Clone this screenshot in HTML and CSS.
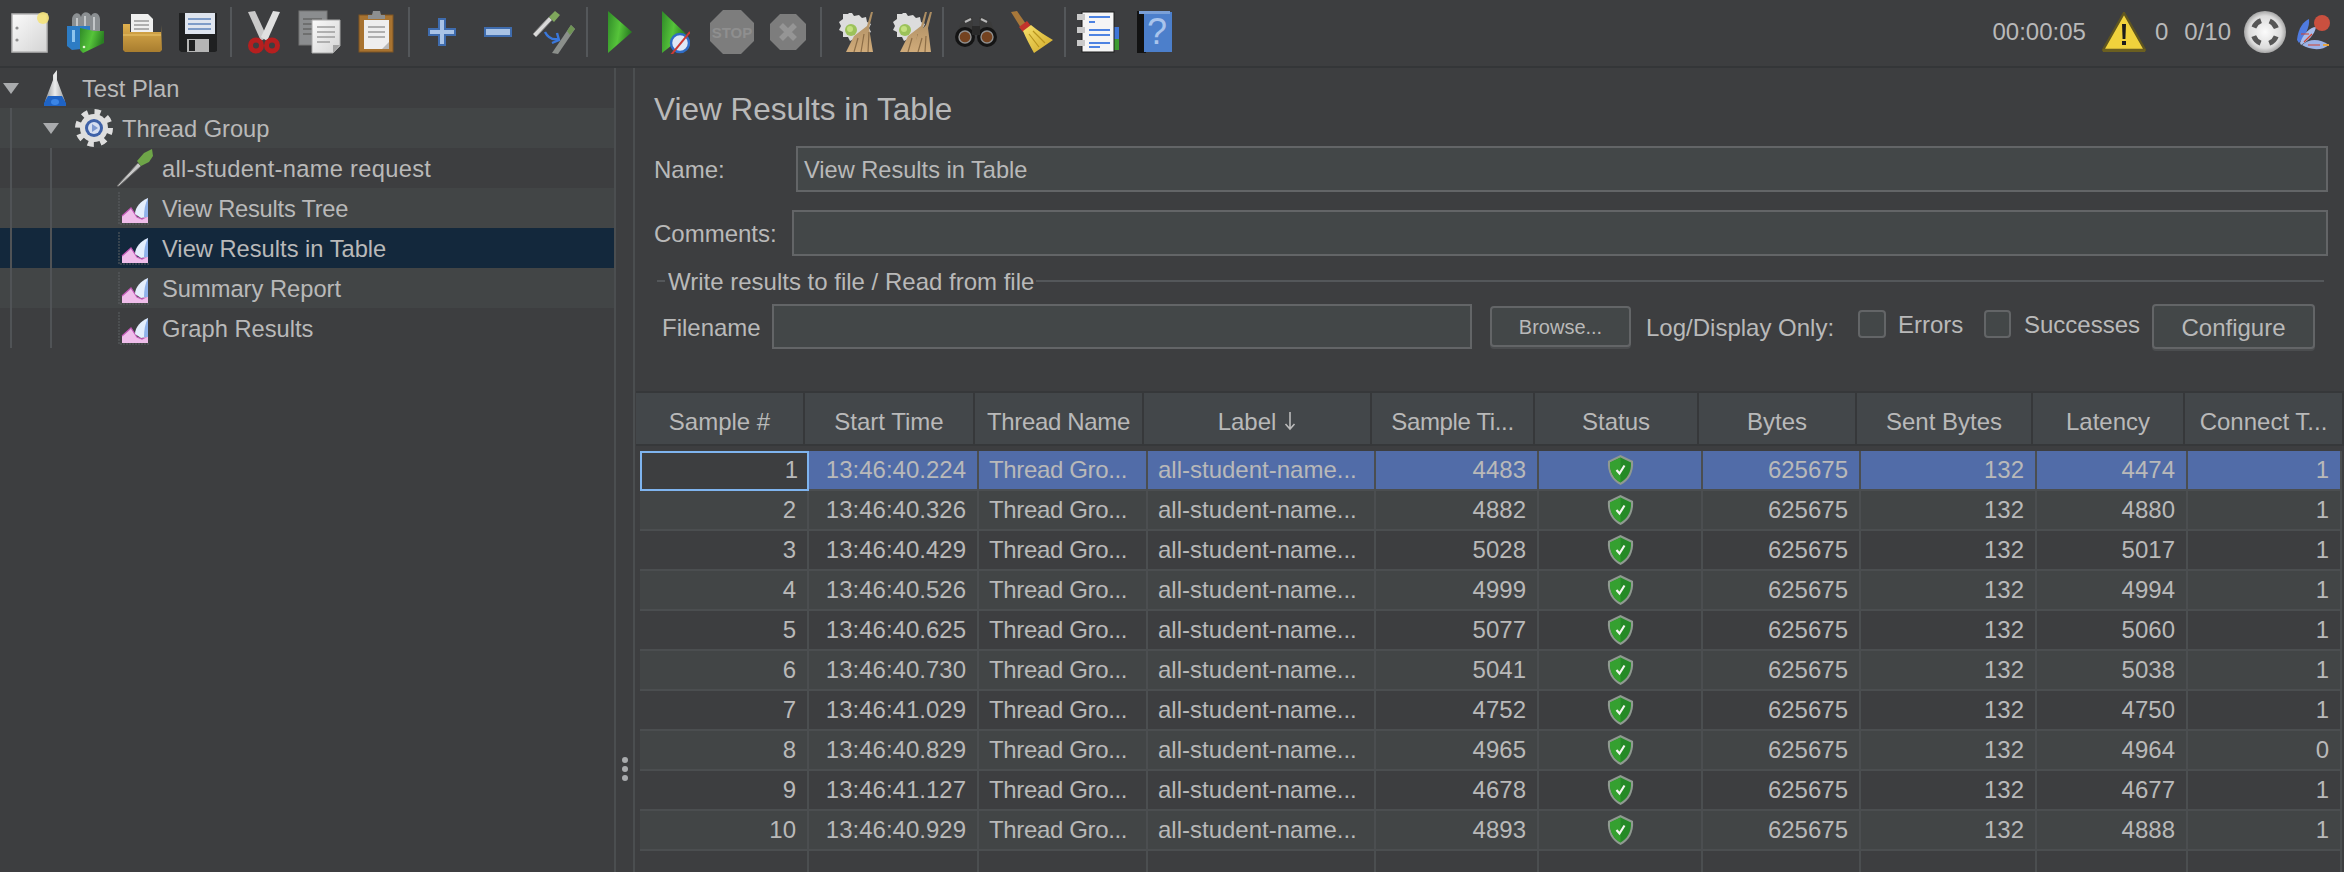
FILE: index.html
```html
<!DOCTYPE html>
<html lang="en">
<head>
<meta charset="utf-8">
<title>Apache JMeter - View Results in Table</title>
<link rel="stylesheet" href="styles.css">
</head>
<body>
<svg class="defs" width="0" height="0" aria-hidden="true">
  <defs>
    <linearGradient id="gPaper" x1="0" y1="0" x2="1" y2="1"><stop offset="0" stop-color="#fafafa"/><stop offset="1" stop-color="#d4d4d4"/></linearGradient>
    <linearGradient id="gGreen" x1="0" y1="0" x2="1" y2="0.3"><stop offset="0" stop-color="#2f8a28"/><stop offset="0.55" stop-color="#56c43a"/><stop offset="1" stop-color="#2a7f22"/></linearGradient>
    <linearGradient id="gFolder" x1="0" y1="0" x2="0" y2="1"><stop offset="0" stop-color="#e0b04e"/><stop offset="1" stop-color="#a87d2f"/></linearGradient>
    <linearGradient id="gTan" x1="0" y1="0" x2="0" y2="1"><stop offset="0" stop-color="#a88a60"/><stop offset="1" stop-color="#d0ab7a"/></linearGradient>
    <linearGradient id="gYellow" x1="0" y1="0" x2="1" y2="1"><stop offset="0" stop-color="#f6e06a"/><stop offset="1" stop-color="#d0a828"/></linearGradient>
    <radialGradient id="gBall" cx="0.5" cy="0.5" r="0.55"><stop offset="0" stop-color="#fbfbfb"/><stop offset="0.7" stop-color="#dcdcdc"/><stop offset="1" stop-color="#8e8e8e"/></radialGradient>
    <linearGradient id="gFlask" x1="0" y1="0" x2="1" y2="0"><stop offset="0" stop-color="#8d9093"/><stop offset="0.5" stop-color="#eceded"/><stop offset="1" stop-color="#9a9c9e"/></linearGradient>
    <symbol id="iGraph" viewBox="0 0 33 33">
      <path d="M1 0V32H32" fill="none" stroke="#5d6062" stroke-width="1" stroke-dasharray="2 1"/>
      <path d="M4 31V24L13 16L19 25L24 27L30 24V31Z" fill="#efbdea"/>
      <path d="M4 24L13 16L19 25L24 27L30 24" fill="none" stroke="#c25ab8" stroke-width="1.2"/>
      <path d="M17 22C17 15 23 9 30 6V25L23 26Z" fill="#e4eefc"/>
      <path d="M30 6V25L26 25C26 18 27 12 30 6Z" fill="#8fb2ea"/>
    </symbol>
    <symbol id="iShield" viewBox="0 0 27 30">
      <path d="M13.5 0L26 6C27 17 22 26 13.5 30C5 26 0 17 1 6Z" fill="#8f9a90"/>
      <path d="M13.5 2.5L24 7.5C24.5 17 20 24 13.5 27.5C7 24 2.5 17 3 7.5Z" fill="#248a26"/>
      <path d="M13.5 2.5V27.5C7 24 2.5 17 3 7.5Z" fill="#35a030"/>
      <path d="M9.5 15L12.5 18.5L17.5 10.5" fill="none" stroke="#f2f7f0" stroke-width="2.2"/>
    </symbol>
    <symbol id="iBroomG" viewBox="0 0 40 44">
      <path d="M15 3l3 0 2 3 5-1 3 3 4-1 1 5 4 2-2 4 2 4-4 2-1 5-5-1-3 3-4-2-4 2-2-4-5 0 0-5-4-2 2-4-2-4 4-3 0-5 5 0z" fill="#dcdcdc"/>
      <circle cx="17" cy="20" r="6" fill="#9cc25a"/>
      <circle cx="16" cy="19" r="3" fill="#c4e07e"/>
      <path d="M39 2L35 18L39 42L12 42L20 26L33 16L37 2Z" fill="url(#gTan)"/>
      <path d="M24 28L20 42M30 24L27 42M35 22L34 42" stroke="#8c6d47" stroke-width="1.2"/>
    </symbol>
  </defs>
</svg>

<div class="app">
  <header class="toolbar">
    <div class="tb-btn"><svg width="38" height="42" viewBox="0 0 38 42"><rect x="1" y="3" width="35" height="38" fill="url(#gPaper)" stroke="#b5b5b5" stroke-width="1.5"/><circle cx="6" cy="17" r="1.6" fill="#8e8e8e"/><circle cx="6" cy="29" r="1.6" fill="#8e8e8e"/><circle cx="32" cy="7" r="6" fill="#f4e27a" opacity=".9"/></svg></div>
    <div class="tb-btn"><svg width="40" height="44" viewBox="0 0 40 44"><path d="M6 10C6 2 14 1 15 7C16 1 23 1 25 6C27 1 35 2 34 12L34 22H6Z" fill="#8b8f92"/><path d="M11 8V20M19 6V20M28 7V20" stroke="#c3c6c8" stroke-width="2"/><path d="M1 16H24V38L6 40L1 36Z" fill="#2d7cc4"/><rect x="6" y="20" width="3" height="12" fill="#8cc4ee"/><path d="M14 18L28 21H38V33L17 43L14 40Z" fill="url(#gGreen)"/><circle cx="18" cy="37" r="1.3" fill="#e2f5d0"/></svg></div>
    <div class="tb-btn"><svg width="40" height="44" viewBox="0 0 40 44"><path d="M9 4H26L31 9V28H9Z" fill="#efefef"/><path d="M12 11H27M12 15H27M12 19H27" stroke="#9a9a9a" stroke-width="1.5"/><path d="M1 14H8V22H39V15L40 40L38 42H3L1 40Z" fill="url(#gFolder)"/><path d="M1 25H39" stroke="#eac56d" stroke-width="1"/></svg></div>
    <div class="tb-btn"><svg width="40" height="42" viewBox="0 0 40 42"><path d="M1 2H39V40L37 41H3L1 39Z" fill="#1f2021"/><rect x="7" y="2" width="30" height="21" fill="#dfe5ef"/><path d="M10 8H33M10 13H33M10 18H33" stroke="#7e9cc8" stroke-width="2"/><rect x="9" y="28" width="22" height="13" fill="#b5b5b5"/><rect x="11" y="29" width="6" height="11" fill="#1f2021"/></svg></div>
    <div class="tb-sep"></div>
    <div class="tb-btn"><svg width="34" height="44" viewBox="0 0 34 44"><path d="M1 2L8 1L20 27L14 31Z" fill="#c9c9c9"/><path d="M33 2L26 1L14 27L20 31Z" fill="#e0e0e0"/><circle cx="9" cy="35.5" r="5.5" fill="none" stroke="#b51f1f" stroke-width="5"/><circle cx="25" cy="35.5" r="5.5" fill="none" stroke="#b51f1f" stroke-width="5"/></svg></div>
    <div class="tb-btn"><svg width="44" height="44" viewBox="0 0 44 44"><rect x="1" y="1" width="28" height="34" fill="#8b8d8f" stroke="#777" /><path d="M5 9H24M5 14H15M5 19H15M5 24H15" stroke="#666" stroke-width="1.6"/><path d="M14 10H42V36L35 43H14Z" fill="url(#gPaper)" stroke="#a8a8a8"/><path d="M19 17H37M19 22H37M19 27H37M19 32H32" stroke="#9d9d9d" stroke-width="1.6"/><path d="M42 35H35V43Z" fill="#a2a2a2"/></svg></div>
    <div class="tb-btn"><svg width="36" height="44" viewBox="0 0 36 44"><rect x="1" y="5" width="34" height="37" fill="#a87330" stroke="#7e5522"/><rect x="6" y="10" width="25" height="29" fill="#eeeeee"/><path d="M10 17H27M10 22H27M10 27H27" stroke="#9a9a9a" stroke-width="1.6"/><path d="M31 32L24 39H31Z" fill="#b8b8b8"/><path d="M10 9V5H14L15 1H22L23 5H27V9Z" fill="#8d8f90"/></svg></div>
    <div class="tb-sep"></div>
    <div class="tb-btn"><svg width="28" height="28" viewBox="0 0 28 28"><path d="M11 1H17V11H27V17H17V27H11V17H1V11H11Z" fill="#a9c3e6" stroke="#3f6cae" stroke-width="2"/></svg></div>
    <div class="tb-btn"><svg width="28" height="10" viewBox="0 0 28 10"><rect x="1" y="1" width="26" height="8" fill="#a9c3e6" stroke="#3f6cae" stroke-width="2"/></svg></div>
    <div class="tb-btn"><svg width="44" height="44" viewBox="0 0 44 44"><path d="M1 24L17 7L20 10L4 27Z" fill="#d9d9d9" stroke="#8a8a8a"/><path d="M17 7L23 1L28 5L22 12Z" fill="#7fa75c"/><path d="M13 22C16 28 20 30 26 29" fill="none" stroke="#3a78dc" stroke-width="2.4"/><path d="M25 23L27 30L20 33" fill="none" stroke="#3a78dc" stroke-width="2.4"/><path d="M20 43L39 15L43 19L26 44Z" fill="#8b8f8b"/><path d="M35 21L39 15L43 19L38 25Z" fill="#6f9455"/></svg></div>
    <div class="tb-sep"></div>
    <div class="tb-btn"><svg width="24" height="44" viewBox="0 0 24 44"><path d="M0 1L24 22L0 43Z" fill="url(#gGreen)"/></svg></div>
    <div class="tb-btn"><svg width="28" height="44" viewBox="0 0 28 44"><path d="M0 1L24 24L0 43Z" fill="url(#gGreen)"/><circle cx="18" cy="33" r="9" fill="#dfe8f6" stroke="#2f6cc4" stroke-width="2.5"/><path d="M9 45L28 22" stroke="#cc3a34" stroke-width="2"/></svg></div>
    <div class="tb-btn"><svg width="44" height="44" viewBox="0 0 44 44"><path d="M13 0H31L44 13V31L31 44H13L0 31V13Z" fill="#7d7d7d"/><text x="22" y="28" text-anchor="middle" class="stop-word">STOP</text></svg></div>
    <div class="tb-btn"><svg width="36" height="36" viewBox="0 0 36 36"><path d="M10 0H26L36 10V26L26 36H10L0 26V10Z" fill="#7d7d7d"/><path d="M11 11L25 25M25 11L11 25" stroke="#959595" stroke-width="5.5"/></svg></div>
    <div class="tb-sep"></div>
    <div class="tb-btn"><svg width="40" height="44"><use href="#iBroomG"/></svg></div>
    <div class="tb-btn"><svg width="44" height="44" viewBox="0 0 44 44"><svg width="40" height="44" x="0"><use href="#iBroomG"/></svg><path d="M44 2L40 18L43 42L24 42L30 24L38 15L42 2Z" fill="url(#gTan)"/><path d="M34 28L30 42M38 26L37 42" stroke="#8c6d47" stroke-width="1.2"/></svg></div>
    <div class="tb-sep"></div>
    <div class="tb-btn"><svg width="44" height="30" viewBox="0 0 44 30"><path d="M7 5L15 0H19V9H25V0H29L37 5L41 17H3Z" fill="#3b3b3b"/><path d="M11 5L17 2M27 2L33 5" stroke="#b9b9b9" stroke-width="2"/><circle cx="11" cy="20" r="10" fill="#141414"/><circle cx="33" cy="20" r="10" fill="#141414"/><circle cx="11" cy="20" r="6" fill="#74421f" stroke="#8f8f8f" stroke-width="1.4"/><circle cx="33" cy="20" r="6" fill="#74421f" stroke="#8f8f8f" stroke-width="1.4"/><path d="M18 9H26V18H18Z" fill="#2a2a2a"/></svg></div>
    <div class="tb-btn"><svg width="44" height="44" viewBox="0 0 44 44"><path d="M1 2L7 1L16 14L11 18Z" fill="#a8783a"/><path d="M9 17L17 11L21 16L13 22Z" fill="#c1342c"/><path d="M13 21L21 15C28 21 36 26 43 30L24 43C20 36 16 28 13 21Z" fill="url(#gYellow)"/><path d="M19 24L29 37M23 21L35 33" stroke="#b8941e" stroke-width="1.2"/></svg></div>
    <div class="tb-sep"></div>
    <div class="tb-btn"><svg width="42" height="42" viewBox="0 0 42 42"><rect x="36" y="16" width="6" height="12" fill="#3f76d8"/><rect x="36" y="28" width="6" height="11" fill="#3d9b30"/><rect x="5" y="1" width="32" height="40" fill="#f5f5f5" stroke="#1d1d1d"/><path d="M0 6H8M0 19H8M0 32H8" stroke="#c9c9c9" stroke-width="6"/><path d="M12 6H33M12 11H18M12 19H33M12 24H33M12 32H33M12 36H23" stroke="#4d83e2" stroke-width="2"/></svg></div>
    <div class="tb-btn"><svg width="36" height="44" viewBox="0 0 36 44"><rect x="1" y="1" width="9" height="42" fill="#121212"/><rect x="8" y="2" width="28" height="40" fill="#4c7fcb"/><rect x="3" y="1" width="31" height="3" fill="#7aa0d8"/><text x="21" y="34" text-anchor="middle" class="help-mark">?</text></svg></div>
    <div class="status">
      <span class="status-time">00:00:05</span>
      <svg class="st-warn" width="44" height="40" viewBox="0 0 44 40"><path d="M22 1L43 38H1Z" fill="#f0d23c" stroke="#5f5520" stroke-width="2.4"/><path d="M1 37H43V40H1Z" fill="#6b5f20"/><path d="M20 12H24L23.4 27H20.6Z" fill="#1c1c1c"/><rect x="20" y="29" width="4" height="4" fill="#1c1c1c"/></svg>
      <span class="st-count">0</span>
      <span class="st-threads">0/10</span>
      <svg class="st-ball" width="44" height="44" viewBox="0 0 44 44"><circle cx="22" cy="22" r="21" fill="url(#gBall)"/><circle cx="22" cy="22" r="12" fill="none" stroke="#565656" stroke-width="5" stroke-dasharray="10 8.85" stroke-dashoffset="-4.4"/></svg>
      <svg class="st-feather" width="36" height="36" viewBox="0 0 36 36"><path d="M1 26C2 14 8 7 13 5C14 13 9 22 3 29Z" fill="#4f7be0"/><path d="M4 29C7 20 14 13 20 13C19 20 12 27 5 31Z" fill="#a9bdeb"/><path d="M6 31C14 24 24 25 33 31C26 37 14 36 6 31Z" fill="#9cb2e6"/><path d="M5 20L13 20M8 28L16 20M12 31L24 31" stroke="#d2432e" stroke-width="1.2"/><path d="M27 31L33 31" stroke="#e6a33e" stroke-width="2"/><circle cx="26" cy="9" r="8" fill="#c9503f"/></svg>
    </div>
  </header>

  <main class="main">
    <nav class="tree">
      <i class="guide guide-a"></i>
      <i class="guide guide-b"></i>
      <div class="tree-row depth-0">
        <i class="arrow"></i>
        <svg class="flask" width="24" height="38" viewBox="0 0 24 38"><path d="M10 6L14 1V11L22 32V37H2V32L10 11Z" fill="url(#gFlask)"/><path d="M5 27H19L23 34V37H1V34Z" fill="#1f63c4"/><ellipse cx="12" cy="33" rx="4" ry="3" fill="#3b85e6"/></svg>
        <span>Test Plan</span>
      </div>
      <div class="tree-row alt depth-1">
        <i class="arrow"></i>
        <svg class="gear" width="38" height="38" viewBox="0 0 38 38"><circle cx="19" cy="19" r="14" fill="#dedede"/><circle cx="19" cy="19" r="16" fill="none" stroke="#dedede" stroke-width="6" stroke-dasharray="6 6.57"/><circle cx="19" cy="19" r="9" fill="#3e61a8"/><circle cx="19" cy="19" r="6" fill="#d5def0"/><path d="M17 15L23 19L17 23Z" fill="#7d98cf"/></svg>
        <span>Thread Group</span>
      </div>
      <div class="tree-row depth-2">
        <svg class="pipette" width="38" height="38" viewBox="0 0 38 38"><path d="M1 37L22 14L25 17L3 37Z" fill="#c8c8c8" stroke="#6e6e6e"/><path d="M21 12L28 4L36 0L37 7L33 13L25 17Z" fill="#6ea548"/></svg>
        <span class="spaced">all-student-name request</span>
      </div>
      <div class="tree-row alt depth-2 leaf"><svg class="graph" width="33" height="33"><use href="#iGraph"/></svg><span class="narrow">View Results Tree</span></div>
      <div class="tree-row selected depth-2 leaf"><svg class="graph" width="33" height="33"><use href="#iGraph"/></svg><span>View Results in Table</span></div>
      <div class="tree-row alt depth-2 leaf"><svg class="graph" width="33" height="33"><use href="#iGraph"/></svg><span>Summary Report</span></div>
      <div class="tree-row depth-2 leaf"><svg class="graph" width="33" height="33"><use href="#iGraph"/></svg><span>Graph Results</span></div>
    </nav>

    <div class="splitter"><i></i><i></i><i></i></div>

    <section class="panel">
      <h1 class="title">View Results in Table</h1>
      <div class="form-row name-row"><label class="lbl">Name:</label><div class="field">View Results in Table</div></div>
      <div class="form-row comments-row"><label class="lbl">Comments:</label><div class="field"></div></div>
      <div class="group-title"><i class="rule-short"></i><span>Write results to file / Read from file</span><i class="rule-long"></i></div>
      <div class="file-row">
        <label class="file-lbl">Filename</label>
        <div class="field file-field"></div>
        <button class="btn btn-browse">Browse...</button>
        <span class="log-lbl">Log/Display Only:</span>
        <i class="check check-a"></i><span class="check-text errors">Errors</span>
        <i class="check check-b"></i><span class="check-text successes">Successes</span>
        <button class="btn btn-config">Configure</button>
      </div>

      <div class="table">
        <div class="thead">
          <div>Sample #</div><div>Start Time</div><div class="tight">Thread Name</div>
          <div class="label-head">Label <svg width="12" height="20" viewBox="0 0 12 20"><path d="M6 1V18M1.5 13L6 18L10.5 13" fill="none" stroke="#bbbbbb" stroke-width="1.6"/></svg></div>
          <div class="tight">Sample Ti...</div><div>Status</div><div>Bytes</div><div>Sent Bytes</div><div>Latency</div><div>Connect T...</div>
        </div>
        <div class="trow selected">
          <div class="num focus">1</div><div class="num">13:46:40.224</div><div class="tight">Thread Gro...</div><div>all-student-name...</div><div class="num">4483</div><div class="ok"><svg width="27" height="30"><use href="#iShield"/></svg></div><div class="num">625675</div><div class="num">132</div><div class="num">4474</div><div class="num">1</div>
        </div>
        <div class="trow alt">
          <div class="num">2</div><div class="num">13:46:40.326</div><div class="tight">Thread Gro...</div><div>all-student-name...</div><div class="num">4882</div><div class="ok"><svg width="27" height="30"><use href="#iShield"/></svg></div><div class="num">625675</div><div class="num">132</div><div class="num">4880</div><div class="num">1</div>
        </div>
        <div class="trow">
          <div class="num">3</div><div class="num">13:46:40.429</div><div class="tight">Thread Gro...</div><div>all-student-name...</div><div class="num">5028</div><div class="ok"><svg width="27" height="30"><use href="#iShield"/></svg></div><div class="num">625675</div><div class="num">132</div><div class="num">5017</div><div class="num">1</div>
        </div>
        <div class="trow alt">
          <div class="num">4</div><div class="num">13:46:40.526</div><div class="tight">Thread Gro...</div><div>all-student-name...</div><div class="num">4999</div><div class="ok"><svg width="27" height="30"><use href="#iShield"/></svg></div><div class="num">625675</div><div class="num">132</div><div class="num">4994</div><div class="num">1</div>
        </div>
        <div class="trow">
          <div class="num">5</div><div class="num">13:46:40.625</div><div class="tight">Thread Gro...</div><div>all-student-name...</div><div class="num">5077</div><div class="ok"><svg width="27" height="30"><use href="#iShield"/></svg></div><div class="num">625675</div><div class="num">132</div><div class="num">5060</div><div class="num">1</div>
        </div>
        <div class="trow alt">
          <div class="num">6</div><div class="num">13:46:40.730</div><div class="tight">Thread Gro...</div><div>all-student-name...</div><div class="num">5041</div><div class="ok"><svg width="27" height="30"><use href="#iShield"/></svg></div><div class="num">625675</div><div class="num">132</div><div class="num">5038</div><div class="num">1</div>
        </div>
        <div class="trow">
          <div class="num">7</div><div class="num">13:46:41.029</div><div class="tight">Thread Gro...</div><div>all-student-name...</div><div class="num">4752</div><div class="ok"><svg width="27" height="30"><use href="#iShield"/></svg></div><div class="num">625675</div><div class="num">132</div><div class="num">4750</div><div class="num">1</div>
        </div>
        <div class="trow alt">
          <div class="num">8</div><div class="num">13:46:40.829</div><div class="tight">Thread Gro...</div><div>all-student-name...</div><div class="num">4965</div><div class="ok"><svg width="27" height="30"><use href="#iShield"/></svg></div><div class="num">625675</div><div class="num">132</div><div class="num">4964</div><div class="num">0</div>
        </div>
        <div class="trow">
          <div class="num">9</div><div class="num">13:46:41.127</div><div class="tight">Thread Gro...</div><div>all-student-name...</div><div class="num">4678</div><div class="ok"><svg width="27" height="30"><use href="#iShield"/></svg></div><div class="num">625675</div><div class="num">132</div><div class="num">4677</div><div class="num">1</div>
        </div>
        <div class="trow alt">
          <div class="num">10</div><div class="num">13:46:40.929</div><div class="tight">Thread Gro...</div><div>all-student-name...</div><div class="num">4893</div><div class="ok"><svg width="27" height="30"><use href="#iShield"/></svg></div><div class="num">625675</div><div class="num">132</div><div class="num">4888</div><div class="num">1</div>
        </div>
        <div class="trow empty">
          <div></div><div></div><div></div><div></div><div></div><div></div><div></div><div></div><div></div><div></div>
        </div>
      </div>
    </section>
  </main>
</div>
</body>
</html>
```

FILE: styles.css
```css
* { box-sizing: border-box; }
html, body { margin: 0; padding: 0; height: 100%; }
body {
  background: #3d3e40;
  color: #b9b9b9;
  font-family: "Liberation Sans", Arial, sans-serif;
  font-size: 24px;
  overflow: hidden;
}
.defs { position: absolute; }
.app { display: flex; flex-direction: column; width: 2344px; height: 872px; }

/* toolbar */
.toolbar {
  display: flex;
  align-items: center;
  height: 68px;
  flex: none;
  padding: 0 12px 2px 2px;
  border-bottom: 2px solid #343638;
}
.tb-btn { width: 56px; display: flex; justify-content: center; align-items: center; flex: none; }
.tb-sep { width: 10px; height: 50px; flex: none; display: flex; justify-content: center; }
.tb-sep::before { content: ""; width: 2px; background: #54575a; }
.stop-word { font: bold 15px "Liberation Sans", sans-serif; fill: #8f8f8f; }
.help-mark { font: 36px "Liberation Sans", sans-serif; fill: #a9c4ec; }
.status { margin-left: auto; display: flex; align-items: center; }
.st-warn { margin-left: 16px; }
.st-count { margin-left: 9px; }
.st-threads { margin-left: 16px; }
.st-ball { margin-left: 12px; }
.st-feather { margin-left: 9px; }

/* main split */
.main { flex: 1; display: flex; min-height: 0; }
.tree { position: relative; width: 616px; flex: none; border-right: 2px solid #4b4e50; }
.tree-row { display: flex; align-items: center; height: 40px; font-size: 23.7px; white-space: nowrap; }
.tree-row span { padding-top: 3px; }
.tree-row .spaced { letter-spacing: 0.3px; }
.tree-row .narrow { letter-spacing: -0.25px; }
.tree-row.alt { background: #424546; }
.tree-row.selected { background: #13283c; }
.depth-0 { padding-left: 3px; }
.depth-1 { padding-left: 43px; }
.depth-2 { padding-left: 116px; }
.leaf { padding-left: 118px; }
.arrow {
  width: 0; height: 0; flex: none;
  border-left: 8.5px solid transparent;
  border-right: 8.5px solid transparent;
  border-top: 11px solid #a9abad;
}
.flask { margin-left: 24px; margin-right: 15px; }
.gear { margin-left: 16px; margin-right: 9px; }
.pipette { margin-right: 8px; }
.graph { margin-right: 11px; }
.guide { position: absolute; width: 2px; background: #505356; z-index: 1; }
.guide-a { left: 10px; top: 40px; height: 240px; }
.guide-b { left: 50px; top: 80px; height: 200px; }

.splitter {
  width: 17px; flex: none;
  display: flex; flex-direction: column; align-items: center; gap: 3px;
  padding-top: 689px;
}
.splitter i { width: 6px; height: 6px; border-radius: 50%; background: #a9abad; }

/* right panel */
.panel {
  flex: 1; min-width: 0;
  display: flex; flex-direction: column;
  border-left: 2px solid #4b4e50;
  overflow: hidden;
}
.title { margin: 22px 0 18px 19px; font-size: 31.5px; font-weight: 400; line-height: 38px; }
.form-row { display: flex; align-items: center; height: 46px; margin-left: 19px; width: 1674px; }
.comments-row { margin-top: 18px; }
.lbl { flex: none; padding-top: 2px; }
.name-row .lbl { width: 142px; }
.comments-row .lbl { width: 138px; }
.field {
  flex: 1; height: 100%;
  background: #434748;
  border: 2px solid #636567;
  padding: 2px 6px 0;
  display: flex; align-items: center;
  font-size: 23.6px;
}
.group-title { display: flex; align-items: center; height: 30px; margin: 10px 0 8px 22px; width: 1667px; }
.group-title span { margin: 2px 2px 0 3px; font-size: 24px; }
.group-title i { height: 2px; background: #54575a; }
.rule-short { width: 8px; }
.rule-long { flex: 1; }
.file-row { display: flex; align-items: center; height: 45px; margin-left: 27px; flex: none; white-space: nowrap; }
.file-lbl { width: 110px; flex: none; padding-top: 2px; }
.file-field { flex: none; width: 700px; }
.btn {
  flex: none;
  color: #b9b9b9;
  font-family: inherit;
  background: #434748;
  border: 2px solid #636567;
  border-radius: 4px;
  box-shadow: 0 2px 0 #4b4d4f;
  padding: 2px 0 0;
}
.btn-browse { margin-left: 18px; width: 141px; height: 41px; font-size: 20px; }
.log-lbl { margin-left: 15px; width: 190px; flex: none; padding-top: 2px; }
.check { flex: none; width: 28px; height: 28px; background: #434748; border: 2px solid #636567; border-radius: 4px; margin-top: -6px; }
.check-a { margin-left: 22px; }
.check-b { margin-left: 22px; width: 27px; }
.check-text { margin-top: -4px; margin-left: 12px; flex: none; }
.check-b + .check-text { margin-left: 13px; }
.errors { width: 64px; }
.successes { width: 113px; }
.btn-config { margin-left: 15px; width: 163px; height: 45px; font-size: 24px; }

/* table */
.table { flex: 1; margin-top: 42px; margin-left: 1px; border-top: 2px solid #36383a; overflow: hidden; min-height: 0; }
.thead {
  display: grid;
  grid-template-columns: 169px 170px 169px 228px 163px 164px 158px 176px 152px 159px;
  height: 53px;
  border-bottom: 2px solid #36383a;
  background: #3d3e40;
}
.thead > div {
  background: #43474a;
  border-right: 2px solid #36383a;
  padding-top: 6px;
  display: flex; align-items: center; justify-content: center;
  white-space: nowrap;
}
.label-head svg { margin-left: 8px; margin-top: -2px; }
.tight { letter-spacing: -0.35px; }
.trow {
  display: grid;
  grid-template-columns: 169px 170px 169px 228px 163px 164px 158px 176px 151px 154px;
  height: 40px;
  margin-left: 4px;
}
.thead + .trow { margin-top: 5px; }
.trow > div {
  border-right: 2px solid #4b4e50;
  border-bottom: 2px solid #4b4e50;
  line-height: 38px;
  padding: 0 10px;
  white-space: nowrap;
  overflow: hidden;
}
.trow.alt > div { background: #424546; }
.trow.selected > div { background: #516ca8; }
.trow > .num { text-align: right; padding-right: 11px; }
.trow > .ok { display: flex; align-items: center; justify-content: center; padding: 0; }
.trow.selected > .focus { background: #3d3e40; border: 2px solid #7fb4ef; line-height: 34px; padding-right: 9px; }
```
